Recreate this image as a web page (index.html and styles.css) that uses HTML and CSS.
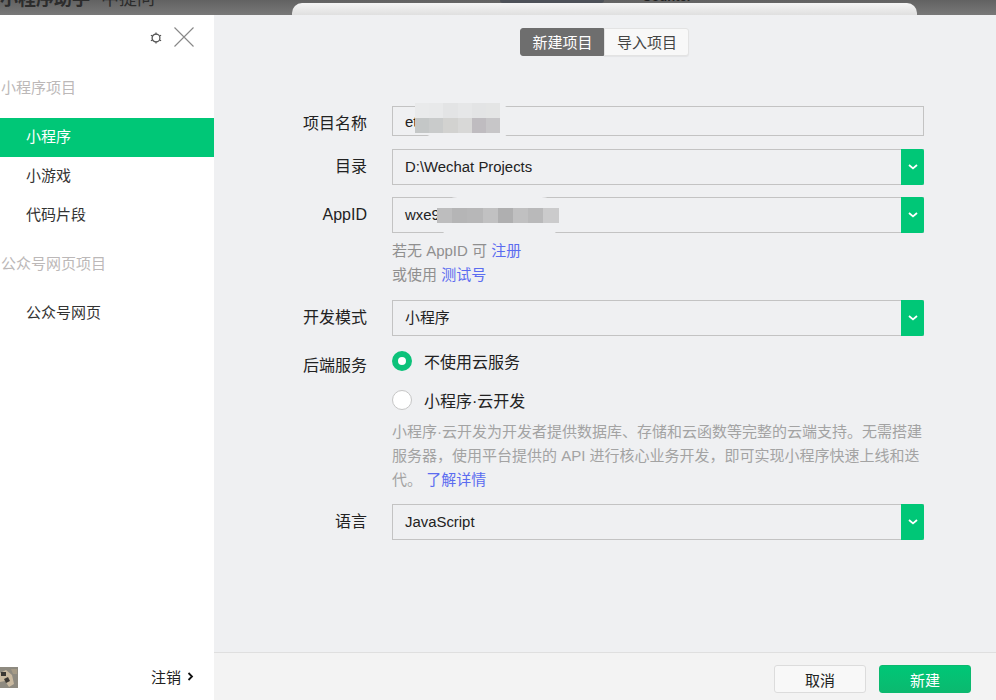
FILE: index.html
```html
<!DOCTYPE html>
<html lang="zh-CN">
<head>
    <meta charset="UTF-8">
    <meta name="viewport" content="width=device-width, initial-scale=1.0">
    <title>新建项目</title>
    <link rel="stylesheet" href="styles.css">
</head>
<body>
    <div class="topbar">
        <div class="app-title"><b>小程序助手</b><span>中提问</span></div>
        <div class="back-tab"></div>
        <div class="back-tab-label">Counter</div>
        <div class="back-window"></div>
    </div>

    <div class="app">
        <aside class="sidebar">
            <div class="side-tools">
                <svg class="icon-gear" viewBox="0 0 12 12" width="12" height="12">
                    <circle cx="6" cy="6" r="3.9" fill="none" stroke="#555" stroke-width="1.3"/>
                    <path d="M6 .6v1.8M6 9.6v1.8M.9 3.2l1.6.9M9.5 7.9l1.6.9M.9 8.8l1.6-.9M9.5 4.1l1.6-.9" stroke="#555" stroke-width="1.2"/>
                </svg>
                <svg class="icon-close" viewBox="0 0 20 20" width="20" height="20">
                    <path d="M.5 .5l19 19M19.5 .5l-19 19" stroke="#888" stroke-width="1.1" fill="none"/>
                </svg>
            </div>
            <div class="side-title first">小程序项目</div>
            <div class="side-item active">小程序</div>
            <div class="side-item">小游戏</div>
            <div class="side-item">代码片段</div>
            <div class="side-title">公众号网页项目</div>
            <div class="side-item">公众号网页</div>
            <div class="side-foot">
                <svg class="avatar" viewBox="0 0 18 21" width="18" height="21">
                    <rect width="18" height="21" fill="#8e8a80"/>
                    <path d="M0 6l6-3 6 5 2 9-5 3-4-6-5 1z" fill="#c9b9a0"/>
                    <path d="M1 5h5v4H1zM4 12l4-2 2 4-4 2z" fill="#3a3733"/>
                    <path d="M11 2h6v5h-4z" fill="#a59a86"/>
                </svg>
                <div class="logout">注销
                    <svg viewBox="0 0 7 9" width="7" height="9"><path d="M1.5 1l3.5 3.5L1.5 8" fill="none" stroke="#111" stroke-width="1.8"/></svg>
                </div>
            </div>
        </aside>

        <main class="main">
            <div class="tabs">
                <div class="tab on">新建项目</div>
                <div class="tab">导入项目</div>
            </div>

            <div class="form">
                <div class="row row-name">
                    <label>项目名称</label>
                    <div class="input short">eti</div>
                </div>
                <div class="row">
                    <label>目录</label>
                    <div class="input">D:\Wechat Projects<span class="arrow"><svg viewBox="0 0 10 6" width="10" height="6"><path d="M1 1l4 3.4L9 1" fill="none" stroke="#fff" stroke-width="1.8"/></svg></span></div>
                </div>
                <div class="row">
                    <label>AppID</label>
                    <div class="input">wxe9<span class="arrow"><svg viewBox="0 0 10 6" width="10" height="6"><path d="M1 1l4 3.4L9 1" fill="none" stroke="#fff" stroke-width="1.8"/></svg></span></div>
                </div>
                <div class="row hint-row">
                    <div class="hint">若无 AppID 可 <a>注册</a><br>或使用 <a>测试号</a></div>
                </div>
                <div class="row">
                    <label>开发模式</label>
                    <div class="input">小程序<span class="arrow"><svg viewBox="0 0 10 6" width="10" height="6"><path d="M1 1l4 3.4L9 1" fill="none" stroke="#fff" stroke-width="1.8"/></svg></span></div>
                </div>
                <div class="row row-radio">
                    <label>后端服务</label>
                    <div class="radios">
                        <div class="radio checked"><i></i>不使用云服务</div>
                        <div class="radio"><i></i>小程序·云开发</div>
                        <p class="desc">小程序·云开发为开发者提供数据库、存储和云函数等完整的云端支持。无需搭建服务器，使用平台提供的 API 进行核心业务开发，即可实现小程序快速上线和迭代。 <a>了解详情</a></p>
                    </div>
                </div>
                <div class="row">
                    <label>语言</label>
                    <div class="input">JavaScript<span class="arrow"><svg viewBox="0 0 10 6" width="10" height="6"><path d="M1 1l4 3.4L9 1" fill="none" stroke="#fff" stroke-width="1.8"/></svg></span></div>
                </div>
            </div>

            <div class="footer">
                <button class="btn">取消</button>
                <button class="btn primary">新建</button>
            </div>

            <!-- 打码 -->
            <div class="blur blur-name"></div>
            <div class="mosaic mosaic-name">
                <s style="background:#e9eaeb"></s><s style="background:#e8e9ea"></s><s style="background:#e3e4e5"></s><s style="background:#e6e7e8"></s><s style="background:#e3e4e5"></s><s style="background:#e4e5e5"></s>
                <s style="background:#c4c7c7"></s><s style="background:#c9cbcb"></s><s style="background:#d2d2d0"></s><s style="background:#d8d8d7"></s><s style="background:#bfbcc0"></s><s style="background:#c7c6c8"></s>
            </div>
            <div class="blur blur-appid"></div>
            <div class="mosaic mosaic-appid">
                <s style="background:#bdbdbe"></s><s style="background:#b5b5b6"></s><s style="background:#b7b7b8"></s><s style="background:#c1c1c2"></s><s style="background:#afafb0"></s><s style="background:#c0c0c1"></s><s style="background:#b9b9ba"></s><s style="background:#cbcbcc"></s>
            </div>
        </main>
    </div>
</body>
</html>
```

FILE: styles.css
```css
html, body {
    margin: 0;
    height: 100%;
    overflow: hidden;
}

body {
    font-family: "Liberation Sans", "Noto Sans CJK SC", sans-serif;
    font-size: 15px;
    color: #222;
    background-color: #fff;
}

/* 顶部被遮住的窗口 */
.topbar {
    position: relative;
    height: 15px;
    overflow: hidden;
    background: linear-gradient(#626262, #787878);
}

.app-title {
    margin-top: -13px;
    font-size: 18px;
    line-height: 24px;
    color: #2c2c2c;
    white-space: nowrap;
}

.app-title b {
    margin-right: 11px;
}

.back-tab {
    position: absolute;
    left: 500px;
    top: 0;
    width: 104px;
    height: 3px;
    background-color: #4d5158;
    border-radius: 0 0 4px 4px;
}

.back-tab-label {
    position: absolute;
    left: 642px;
    top: -10px;
    font-size: 13px;
    line-height: 14px;
    font-weight: bold;
    color: #222;
}

.back-window {
    position: absolute;
    left: 292px;
    top: 3px;
    width: 625px;
    height: 14px;
    border-radius: 10px 10px 0 0;
    background: linear-gradient(#f5f5f5, #dcdcdc);
}

.app {
    display: flex;
    height: 685px;
}

/* 左边栏 */
.sidebar {
    width: 214px;
    flex-shrink: 0;
    display: flex;
    flex-direction: column;
    background-color: #fff;
}

.side-tools {
    height: 44px;
    display: flex;
    justify-content: flex-end;
    align-items: center;
    gap: 12px;
    padding: 0 20px 0 0;
}

.icon-gear {
    margin-top: 1px;
}

.side-title {
    margin-top: 9px;
    padding-left: 1px;
    line-height: 40px;
    color: #bcb8b8;
}

.side-title.first {
    margin-top: 9px;
    margin-bottom: 10px;
}

.side-item {
    height: 39px;
    line-height: 38px;
    padding-left: 26px;
    color: #333;
}

.side-item.active {
    background-color: #00c777;
    color: #fff;
}

.side-title + .side-item:not(.active) {
    margin-top: 10px;
}

.side-foot {
    margin-top: auto;
    height: 48px;
    display: flex;
    align-items: center;
    justify-content: space-between;
    padding-right: 20px;
}

.avatar {
    margin-top: 2px;
}

.logout {
    display: flex;
    align-items: center;
    gap: 6px;
    color: #222;
}

/* 右边内容 */
.main {
    position: relative;
    flex: 1;
    display: flex;
    flex-direction: column;
    background-color: #eff0f2;
}

.tabs {
    display: flex;
    justify-content: center;
    margin-top: 13px;
    padding-right: 1px;
}

.tab {
    width: 85px;
    height: 28px;
    box-sizing: border-box;
    padding-left: 1px;
    line-height: 27px;
    text-align: center;
    background-color: #f8f8f8;
    color: #444;
    border: 1px solid #e3e3e3;
    border-radius: 0 3px 3px 0;
    box-shadow: 0 1px 1px rgba(0, 0, 0, 0.05);
}

.tab.on {
    width: 84px;
    background-color: #6e6e6e;
    border-color: #6e6e6e;
    color: #fff;
    border-radius: 3px 0 0 3px;
    box-shadow: none;
}

.form {
    margin-top: 50px;
    flex: 1;
}

.row {
    display: flex;
    margin-bottom: 12px;
}

.row label {
    width: 153px;
    margin-right: 25px;
    text-align: right;
    font-size: 16px;
    line-height: 35px;
    color: #222;
}

.input {
    position: relative;
    width: 532px;
    height: 36px;
    box-sizing: border-box;
    border: 1px solid #c3c3c3;
    padding-left: 12px;
    line-height: 34px;
    font-size: 14.9px;
    color: #222;
}

.input.short {
    height: 30px;
    line-height: 30px;
}

.row-name {
    height: 30px;
    margin-bottom: 13px;
}

.row-name label {
    line-height: 36px;
}

.arrow {
    position: absolute;
    right: -1px;
    top: -1px;
    width: 23px;
    height: 36px;
    display: flex;
    align-items: center;
    justify-content: center;
    background-color: #00c777;
    border-radius: 0 2px 2px 0;
}

.hint-row {
    padding-left: 178px;
    margin-top: -6px;
    margin-bottom: 13px;
}

.hint {
    line-height: 24px;
    color: #8f8f8f;
}

a {
    color: #5b6cf0;
}

.row-radio label {
    line-height: 36px;
}

.radios {
    width: 532px;
    margin-top: -7px;
}

.radio {
    display: flex;
    align-items: center;
    height: 39px;
    font-size: 16px;
    color: #222;
}

.radio i {
    width: 20px;
    height: 20px;
    box-sizing: border-box;
    margin-right: 12px;
    border: 1px solid #c6c6c6;
    border-radius: 50%;
    background-color: #fff;
}

.radio.checked i {
    border: 6px solid #0cc27a;
}

.desc {
    margin: 1px 0 0;
    line-height: 24px;
    color: #a3a3a3;
}

/* 底部按钮 */
.footer {
    height: 48px;
    box-sizing: border-box;
    border-top: 1px solid #dfdfdf;
    background-color: #f3f3f3;
    display: flex;
    justify-content: flex-end;
    align-items: flex-start;
    gap: 13px;
    padding: 12px 25px 0 0;
}

.btn {
    width: 92px;
    height: 28px;
    font-family: inherit;
    font-size: 15px;
    background-color: #f8f8f8;
    border: 1px solid #dcdcdc;
    border-radius: 3px;
    color: #222;
    padding: 0;
}

.btn.primary {
    background: linear-gradient(#00c777, #0bb96f);
    border-color: #0bb96f;
    color: #fff;
}

/* 打码块 */
.blur {
    position: absolute;
    background-color: #eff0f2;
}

.blur-name {
    left: 201px;
    top: 88px;
    width: 96px;
    height: 36px;
    border-radius: 14px 22px 22px 40px;
}

.blur-appid {
    left: 223px;
    top: 182px;
    width: 125px;
    height: 41px;
    border-radius: 24px;
}

.mosaic {
    position: absolute;
    display: grid;
}

.mosaic s {
    display: block;
}

.mosaic-name {
    left: 201px;
    top: 88px;
    grid-template-columns: repeat(6, 14.2px);
    grid-auto-rows: 15px;
}

.mosaic-appid {
    left: 223px;
    top: 193px;
    grid-template-columns: repeat(8, 15.2px);
    grid-auto-rows: 15px;
}
```
